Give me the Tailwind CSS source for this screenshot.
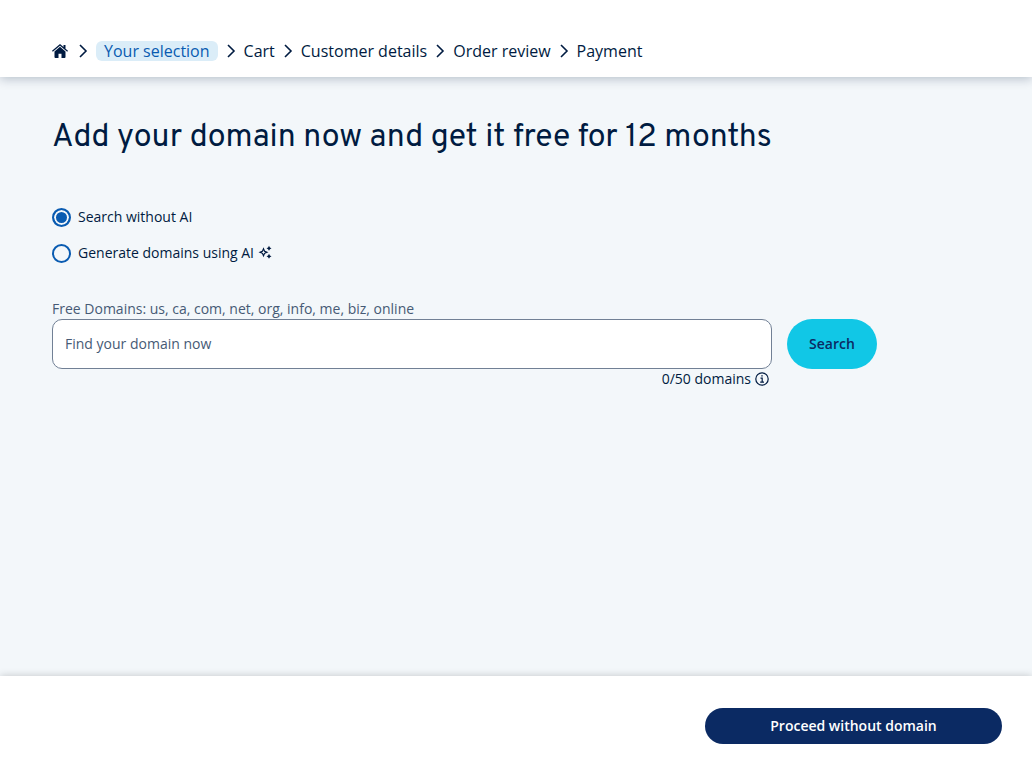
<!DOCTYPE html>
<html lang="en">
<head>
  <meta charset="UTF-8" />
  <meta name="viewport" content="width=device-width, initial-scale=1.0" />
  <title>Add your domain</title>
  <script src="https://cdn.jsdelivr.net/npm/@tailwindcss/browser@4"></script>
</head>
<body class="flex min-h-screen flex-col bg-[#f3f7fa] font-['Open_Sans',sans-serif] text-sm text-[#001b41]">

  <header class="relative bg-white px-[52px] pt-[41px] pb-4 shadow-[0_2px_10px_rgba(0,27,65,0.25)]">
    <nav aria-label="Order steps">
      <ol class="flex items-center text-base leading-5">
        <li class="flex items-center">
          <a href="#" aria-label="Home">
            <svg class="h-4 w-4" viewBox="0 0 16 16" fill="currentColor">
              <path d="M8 3.8 2.500 8.500V14a.9.9 0 0 0 .9.9h3.100v-4.200h3v4.200h3.100a.9.9 0 0 0 .9-.9V8.500z" />
              <path d="M8 1 0 7.800l.8 1L8 2.700l7.200 6.100.8-1-2.500-2.100V2h-2v2z" />
            </svg>
          </a>
        </li>
        <li class="flex items-center">
          <svg class="mx-2 h-4 w-3" viewBox="0 0 12 16" fill="none" stroke="currentColor" stroke-width="1.6"><path d="m4 2 6 6-6 6" /></svg>
          <a href="#" aria-current="step" class="rounded-md bg-[#dbedf8] px-2 text-[#095bb1]">Your selection</a>
        </li>
        <li class="flex items-center">
          <svg class="mx-[7px] h-4 w-3" viewBox="0 0 12 16" fill="none" stroke="currentColor" stroke-width="1.6"><path d="m3 2 6 6-6 6" /></svg>
          <span>Cart</span>
        </li>
        <li class="flex items-center">
          <svg class="mx-[7px] h-4 w-3" viewBox="0 0 12 16" fill="none" stroke="currentColor" stroke-width="1.6"><path d="m3 2 6 6-6 6" /></svg>
          <span>Customer details</span>
        </li>
        <li class="flex items-center">
          <svg class="mx-[7px] h-4 w-3" viewBox="0 0 12 16" fill="none" stroke="currentColor" stroke-width="1.6"><path d="m3 2 6 6-6 6" /></svg>
          <span>Order review</span>
        </li>
        <li class="flex items-center">
          <svg class="mx-[7px] h-4 w-3" viewBox="0 0 12 16" fill="none" stroke="currentColor" stroke-width="1.6"><path d="m3 2 6 6-6 6" /></svg>
          <span>Payment</span>
        </li>
      </ol>
    </nav>
  </header>

  <main class="flex-1 px-[52px] pt-9">
    <h1 class="font-[Overpass,Roboto,sans-serif] text-[32px] leading-[50px]">Add your domain now and get it free for 12 months</h1>

    <form class="mt-11 max-w-[825px]">
      <fieldset class="flex flex-col gap-4">
        <label class="flex items-center gap-[7px]">
          <input type="radio" name="mode" checked class="h-[19px] w-[19px] appearance-none rounded-full border-2 border-[#095bb1] checked:bg-[#095bb1] checked:shadow-[inset_0_0_0_2px_#f3f7fa]">
          <span>Search without AI</span>
        </label>
        <label class="flex items-center gap-[7px]">
          <input type="radio" name="mode" class="h-[19px] w-[19px] appearance-none rounded-full border-2 border-[#095bb1]">
          <span>Generate domains using AI</span>
          <svg class="-ml-1 h-4 w-4" viewBox="0 0 16 16" fill="currentColor">
            <path fill-rule="evenodd" d="M6.500 2.300 8 5.800 11.500 7.300 8 8.800 6.500 12.300 5 8.800 1.500 7.300 5 5.800zM6.500 5.300 5.900 6.700 4.500 7.300 5.900 7.900 6.500 9.300 7.100 7.900 8.500 7.300 7.100 6.700z" />
            <path d="m12 .8.9 1.600 1.600.9-1.600.9L12 5.800l-.9-1.600-1.600-.9 1.600-.9zM12 8.800l.9 1.600 1.600.9-1.600.9-.9 1.600-.9-1.600-1.600-.9 1.600-.9z" />
          </svg>
        </label>
      </fieldset>

      <label for="domain" class="mt-9 block text-[#465a75]">Free Domains: us, ca, com, net, org, info, me, biz, online</label>
      <div class="flex gap-[15px]">
        <input type="text" id="domain" placeholder="Find your domain now"
               class="h-[50px] min-w-0 flex-1 rounded-[10px] border border-[#718095] bg-white px-3 pb-0.5 placeholder:text-[#465a75]">
        <button type="submit" class="w-[90px] rounded-full bg-[#11c7e6] font-semibold text-[#0b2a63]">Search</button>
      </div>
      <p class="mr-[108px] flex items-center justify-end gap-1">
        0/50 domains
        <svg class="h-[14px] w-[14px]" viewBox="0 0 14 14" fill="none" stroke="currentColor" stroke-width="1.200">
          <circle cx="7" cy="7" r="6.200" />
          <path d="M5.500 6.200H7.200V10M5.200 10.200h3.800M6.300 3.900h1.400" />
        </svg>
      </p>
    </form>
  </main>

  <footer class="flex justify-end bg-white px-[30px] pt-8 pb-[22px] shadow-[0_0_8px_rgba(0,0,0,0.2)]">
    <button type="button" class="h-9 w-[297px] rounded-full bg-[#0b2a63] font-semibold text-white">Proceed without domain</button>
  </footer>

</body>
</html>
